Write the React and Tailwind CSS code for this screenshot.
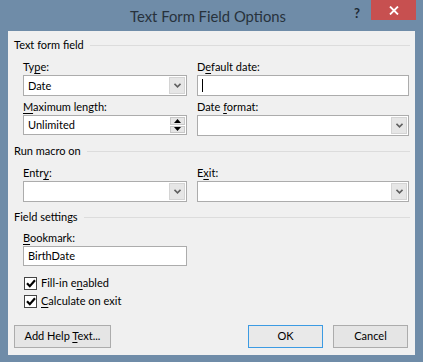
import React from 'react';

const font = "font-['Lato',_'Noto_Sans',_sans-serif]";

function U({ children }) {
  return <span className="underline decoration-1 underline-offset-[2px]">{children}</span>;
}

function Header({ children }) {
  return (
    <div className="flex items-center h-[16px] pl-[6px] pr-[5px]">
      <span className="text-[#000]">{children}</span>
      <div className="flex-1 h-px bg-[#dcdcdc] ml-[6px]" />
    </div>
  );
}

function Label({ children }) {
  return <div className="h-[16px] leading-[16px]">{children}</div>;
}

function Chevron() {
  return (
    <svg width="7" height="5" viewBox="0 0 7 5">
      <path d="M0.5 0.8 L3.5 3.8 L6.5 0.8" fill="none" stroke="#606060" strokeWidth="1.6" />
    </svg>
  );
}

function Combo({ value, w }) {
  return (
    <div className={`${w} h-[21px] flex border border-[#acacac] bg-white`}>
      <div className="flex-1 pl-[4px] leading-[19px]">{value}</div>
      <div className="w-[16px] my-px mr-px bg-[#e6e6e6] border border-[#d4d4d4] flex items-center justify-center">
        <Chevron />
      </div>
    </div>
  );
}

function TextBox({ value, w, children }) {
  return (
    <div className={`${w} h-[20px] flex items-center border border-[#acacac] bg-white pl-[4px]`}>
      {value}
      {children}
    </div>
  );
}

function Spinner() {
  return (
    <div className="w-[15px] my-px mr-px flex flex-col gap-px">
      <div className="flex-1 bg-[#e6e6e6] border border-[#c8c8c8] flex items-center justify-center">
        <svg width="7" height="4" viewBox="0 0 7 4"><path d="M0 4 L3.5 0 L7 4 Z" fill="#000" /></svg>
      </div>
      <div className="flex-1 bg-[#e6e6e6] border border-[#c8c8c8] flex items-center justify-center">
        <svg width="7" height="4" viewBox="0 0 7 4"><path d="M0 0 L3.5 4 L7 0 Z" fill="#000" /></svg>
      </div>
    </div>
  );
}

function Check({ children }) {
  return (
    <div className="h-[18px] flex items-center pl-[16px]">
      <div className="w-[13px] h-[13px] border border-[#444] bg-white flex items-center justify-center">
        <svg width="10" height="9" viewBox="0 0 10 9">
          <path d="M1 4.3 L3.8 7.2 L9 1.3" fill="none" stroke="#000" strokeWidth="2.2" />
        </svg>
      </div>
      <span className="ml-[4px]">{children}</span>
    </div>
  );
}

function Button({ children, primary, w }) {
  return (
    <div
      className={`${w} h-[23px] flex items-center justify-center bg-[#e5e5e5] border ${
        primary ? 'border-[#3c9be3] bg-[#e9e9e9]' : 'border-[#acacac]'
      }`}
    >
      <span>{children}</span>
    </div>
  );
}

export default function App() {
  return (
    <div className={`w-[423px] h-[362px] bg-[#6f8ca8] flex flex-col ${font} text-[11px] text-[#000]`}>
      <div className="h-[31px] flex">
        <div className="flex-1" />
        <div className="text-[14.8px] text-[#27323c] leading-[31px] pt-px">Text Form Field Options</div>
        <div className="flex-1 flex justify-end items-start pr-[7px]">
          <span className="mt-[6px] mr-[11px] font-bold text-[13px] leading-[14px] text-[#1e2a35]">?</span>
          <div className="w-[45px] h-[20px] bg-[#c75050] flex items-center justify-center">
            <svg width="10" height="9" viewBox="0 0 10 9">
              <path d="M1 0.5 L9 8.5 M9 0.5 L1 8.5" stroke="#fff" strokeWidth="1.8" />
            </svg>
          </div>
        </div>
      </div>

      <div className="flex-1 mx-[8px] mb-[8px] bg-[#f0f0f0] pt-[6px] pb-[7px] flex flex-col">
        <Header>Text form field</Header>
        <div className="grid grid-cols-[164px_212px] gap-x-[10px] pl-[15px] mt-[6px]">
          <div>
            <Label>Ty<U>p</U>e:</Label>
            <Combo value="Date" w="w-[164px]" />
          </div>
          <div>
            <Label>D<U>e</U>fault date:</Label>
            <TextBox w="w-[212px] h-[21px]">
              <div className="w-px h-[13px] bg-black" />
            </TextBox>
          </div>
          <div className="mt-[3px]">
            <Label><U>M</U>aximum length:</Label>
            <div className="w-[164px] h-[20px] flex border border-[#acacac] bg-white">
              <div className="flex-1 pl-[4px] leading-[18px]">Unlimited</div>
              <Spinner />
            </div>
          </div>
          <div className="mt-[3px]">
            <Label>Date <U>f</U>ormat:</Label>
            <Combo value="" w="w-[212px]" />
          </div>
        </div>

        <div className="mt-[7px]">
          <Header>Run macro on</Header>
        </div>
        <div className="grid grid-cols-[164px_212px] gap-x-[10px] pl-[15px] mt-[6px]">
          <div>
            <Label>Entr<U>y</U>:</Label>
            <Combo value="" w="w-[164px]" />
          </div>
          <div>
            <Label>E<U>x</U>it:</Label>
            <Combo value="" w="w-[212px]" />
          </div>
        </div>

        <div className="mt-[7px]">
          <Header>Field settings</Header>
        </div>
        <div className="pl-[15px] mt-[5px]">
          <Label><U>B</U>ookmark:</Label>
          <TextBox value="BirthDate" w="w-[164px]" />
        </div>
        <div className="mt-[8px]">
          <Check>Fill-in e<U>n</U>abled</Check>
          <Check><U>C</U>alculate on exit</Check>
        </div>

        <div className="mt-[15px] flex pl-[6px] pr-[7px]">
          <Button w="w-[97px]">Add Help <U>T</U>ext...</Button>
          <div className="flex-1" />
          <Button w="w-[75px]" primary>OK</Button>
          <div className="w-[10px]" />
          <Button w="w-[75px]">Cancel</Button>
        </div>
      </div>
    </div>
  );
}
